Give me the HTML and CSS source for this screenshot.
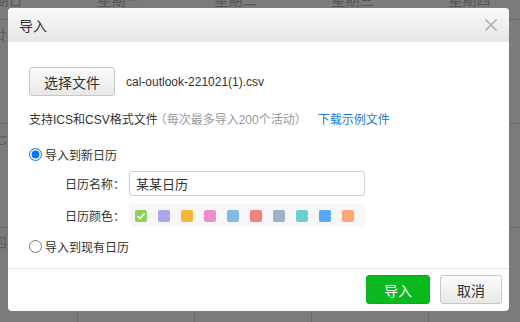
FILE: index.html
```html
<!DOCTYPE html>
<html lang="zh-CN">
<head>
    <meta charset="UTF-8">
    <meta name="viewport" content="width=device-width, initial-scale=1.0">
    <title>导入</title>
    <link rel="stylesheet" href="styles.css">
</head>
<body>
    <div class="calendar">
        <div class="cal-head">
            <span>星期日</span>
            <span>星期一</span>
            <span>星期二</span>
            <span>星期三</span>
            <span>星期四</span>
        </div>
        <div class="cal-row">
            <div class="cal-cell"><span class="lunar">廿</span></div>
            <div class="cal-cell"></div>
            <div class="cal-cell"></div>
            <div class="cal-cell"></div>
            <div class="cal-cell"></div>
        </div>
        <div class="cal-row">
            <div class="cal-cell"><span class="lunar">七</span></div>
            <div class="cal-cell"></div>
            <div class="cal-cell"></div>
            <div class="cal-cell"></div>
            <div class="cal-cell"></div>
        </div>
        <div class="cal-row">
            <div class="cal-cell"><span class="lunar">四</span></div>
            <div class="cal-cell"></div>
            <div class="cal-cell"></div>
            <div class="cal-cell"></div>
            <div class="cal-cell"></div>
        </div>
    </div>

    <div class="dialog">
        <div class="dialog-head">
            <span class="dialog-title">导入</span>
            <button class="close-btn" aria-label="关闭">
                <svg width="12" height="12" viewBox="0 0 12 12">
                    <path d="M0.5 0.5 L11.5 11.5 M11.5 0.5 L0.5 11.5" stroke="#b3b3b3" stroke-width="1.6" fill="none"/>
                </svg>
            </button>
        </div>

        <div class="dialog-body">
            <div class="file-row">
                <button class="btn">选择文件</button>
                <span class="file-name">cal-outlook-221021(1).csv</span>
            </div>

            <div class="hint">
                支持ICS和CSV格式文件<span class="muted">（每次最多导入200个活动）</span><a class="link" href="#">下载示例文件</a>
            </div>

            <label class="radio-row">
                <input type="radio" name="target" checked>
                <span>导入到新日历</span>
            </label>

            <div class="field">
                <span class="field-label">日历名称：</span>
                <input class="text-input" type="text" value="某某日历">
            </div>

            <div class="field">
                <span class="field-label">日历颜色：</span>
                <div class="swatches">
                    <span class="swatch selected" style="background:#8ecf58">
                        <svg width="12" height="12" viewBox="0 0 12 12">
                            <path d="M2.5 6.2 L5 8.6 L9.6 3.6" stroke="#fff" stroke-width="1.6" fill="none"/>
                        </svg>
                    </span>
                    <span class="swatch" style="background:#a9a8ee"></span>
                    <span class="swatch" style="background:#f5b73b"></span>
                    <span class="swatch" style="background:#ec8fcd"></span>
                    <span class="swatch" style="background:#7fbbe5"></span>
                    <span class="swatch" style="background:#f2827f"></span>
                    <span class="swatch" style="background:#9cb0cb"></span>
                    <span class="swatch" style="background:#6ad3d2"></span>
                    <span class="swatch" style="background:#5aa8f7"></span>
                    <span class="swatch" style="background:#fea87a"></span>
                </div>
            </div>

            <label class="radio-row">
                <input type="radio" name="target">
                <span>导入到现有日历</span>
            </label>
        </div>

        <div class="dialog-foot">
            <button class="btn btn-primary">导入</button>
            <button class="btn btn-cancel">取消</button>
        </div>
    </div>
</body>
</html>
```

FILE: styles.css
```css
body {
    margin: 0;
    width: 520px;
    height: 322px;
    overflow: hidden;
    background-color: #7b7b7b;
    font-family: 'Liberation Sans', 'Noto Sans CJK SC', sans-serif;
    color: #333;
    position: relative;
}
/* Dimmed calendar behind the dialog */
.calendar {
    width: 520px;
}
.cal-head {
    display: grid;
    grid-template-columns: repeat(5, 117px);
    margin-left: -57px;
    height: 19px;
    overflow: hidden;
}
.cal-head span {
    display: block;
    margin-top: -7px;
    text-align: center;
    font-size: 14px;
    line-height: 14px;
    color: #565656;
}
.cal-row {
    display: grid;
    grid-template-columns: 78px repeat(4, 117px) 1fr;
    height: 103px;
    border-top: 1px solid #6c6c6c;
}
.cal-cell {
    border-right: 1px solid #6c6c6c;
    padding-top: 4px;
}
.lunar {
    display: block;
    margin-left: -7px;
    font-size: 14px;
    color: #5e5e5e;
}
/* Dialog */
.dialog {
    position: absolute;
    left: 8px;
    top: 8px;
    width: 501px;
    height: 303px;
    background: #fff;
    border-radius: 4px;
    display: flex;
    flex-direction: column;
    overflow: hidden;
}
.dialog-head {
    height: 34px;
    padding: 0 12px 0 11px;
    display: flex;
    align-items: center;
    justify-content: space-between;
    background: linear-gradient(#fafafa, #e6e6e6);
}
.dialog-title {
    font-size: 14px;
    color: #333;
}
.close-btn {
    background: none;
    border: none;
    padding: 0;
    width: 12px;
    height: 12px;
    display: flex;
    cursor: pointer;
}
.dialog-body {
    flex: 1;
    padding: 25px 21px 0;
    font-size: 12px;
}
.file-row {
    display: flex;
    align-items: center;
}
.btn {
    height: 29px;
    padding: 0 14px;
    font-family: inherit;
    font-size: 14px;
    color: #333;
    background: linear-gradient(#fbfbfb, #e8e8e8);
    border: 1px solid #c9c9c9;
    border-radius: 3px;
    cursor: pointer;
}
.file-name {
    margin-left: 11px;
    font-size: 12px;
    color: #333;
}
.hint {
    margin-top: 15px;
    line-height: 18px;
}
.muted {
    color: #999;
    margin-left: -3px;
}
.link {
    margin-left: 11px;
    color: #1f7ad6;
    text-decoration: none;
}
.radio-row {
    display: flex;
    align-items: center;
    margin-top: 16px;
    height: 18px;
}
.radio-row input {
    margin: 0 3px 0 0;
    width: 13px;
    height: 13px;
}
.field {
    display: flex;
    align-items: center;
    margin-top: 6px;
    padding-left: 36px;
}
.field + .field {
    margin-top: 8px;
}
.field-label {
    width: 64px;
}
.text-input {
    width: 236px;
    height: 25px;
    box-sizing: border-box;
    padding: 0 6px;
    border: 1px solid #cfcfcf;
    border-radius: 3px;
    font-family: inherit;
    font-size: 13px;
    color: #333;
    outline: none;
}
.swatches {
    width: 236px;
    height: 23px;
    box-sizing: border-box;
    padding: 0 6px;
    display: flex;
    align-items: center;
    gap: 11px;
    background: #f7f7f7;
    border-radius: 3px;
}
.swatch {
    width: 12px;
    height: 12px;
    border-radius: 2px;
    display: flex;
}
.radio-row + .field {
    margin-top: 8px;
}
.field + .radio-row {
    margin-top: 10px;
}
.dialog-foot {
    border-top: 1px solid #e5e5e5;
    padding: 6px 7px 7px;
    display: flex;
    justify-content: flex-end;
    gap: 10px;
}
.btn-primary {
    width: 64px;
    background: #0ab91e;
    border-color: #09ae1b;
    color: #fff;
}
.btn-cancel {
    width: 62px;
}
```
